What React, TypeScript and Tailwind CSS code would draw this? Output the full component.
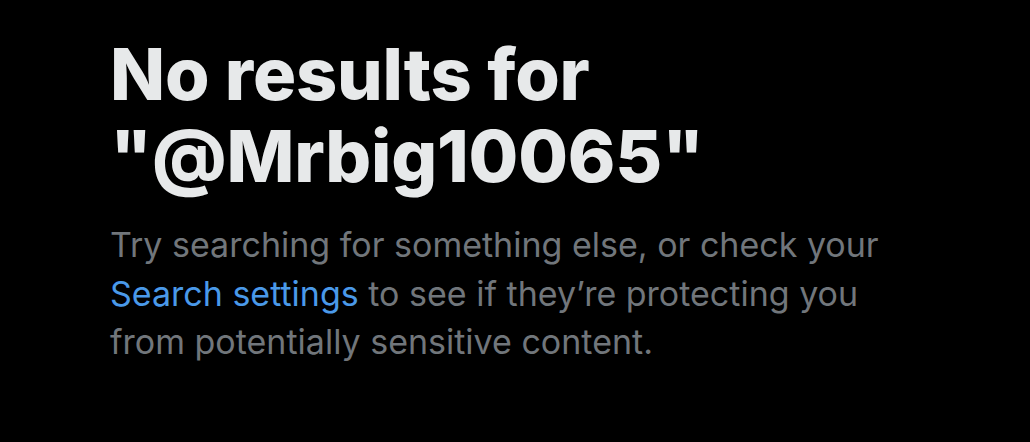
import React from "react";

export default function App() {
  return (
    <div className="w-[1030px] h-[442px] bg-black overflow-hidden" style={{ fontFamily: 'Inter, "Noto Sans", sans-serif' }}>
      <div className="pl-[110px] pt-[33px]">
        <h1 className="text-[72px] leading-[82px] font-extrabold text-[#e7e9ea] tracking-[-0.2px]">
          No results for
          <br />
          "@Mrbig10065"
        </h1>
        <p className="mt-[24px] text-[34px] leading-[48.5px] text-[#71767b]">
          Try searching for something else, or check your
          <br />
          <span className="text-[#4a99e9]">Search settings</span> to see if they’re protecting you
          <br />
          from potentially sensitive content.
        </p>
      </div>
    </div>
  );
}
